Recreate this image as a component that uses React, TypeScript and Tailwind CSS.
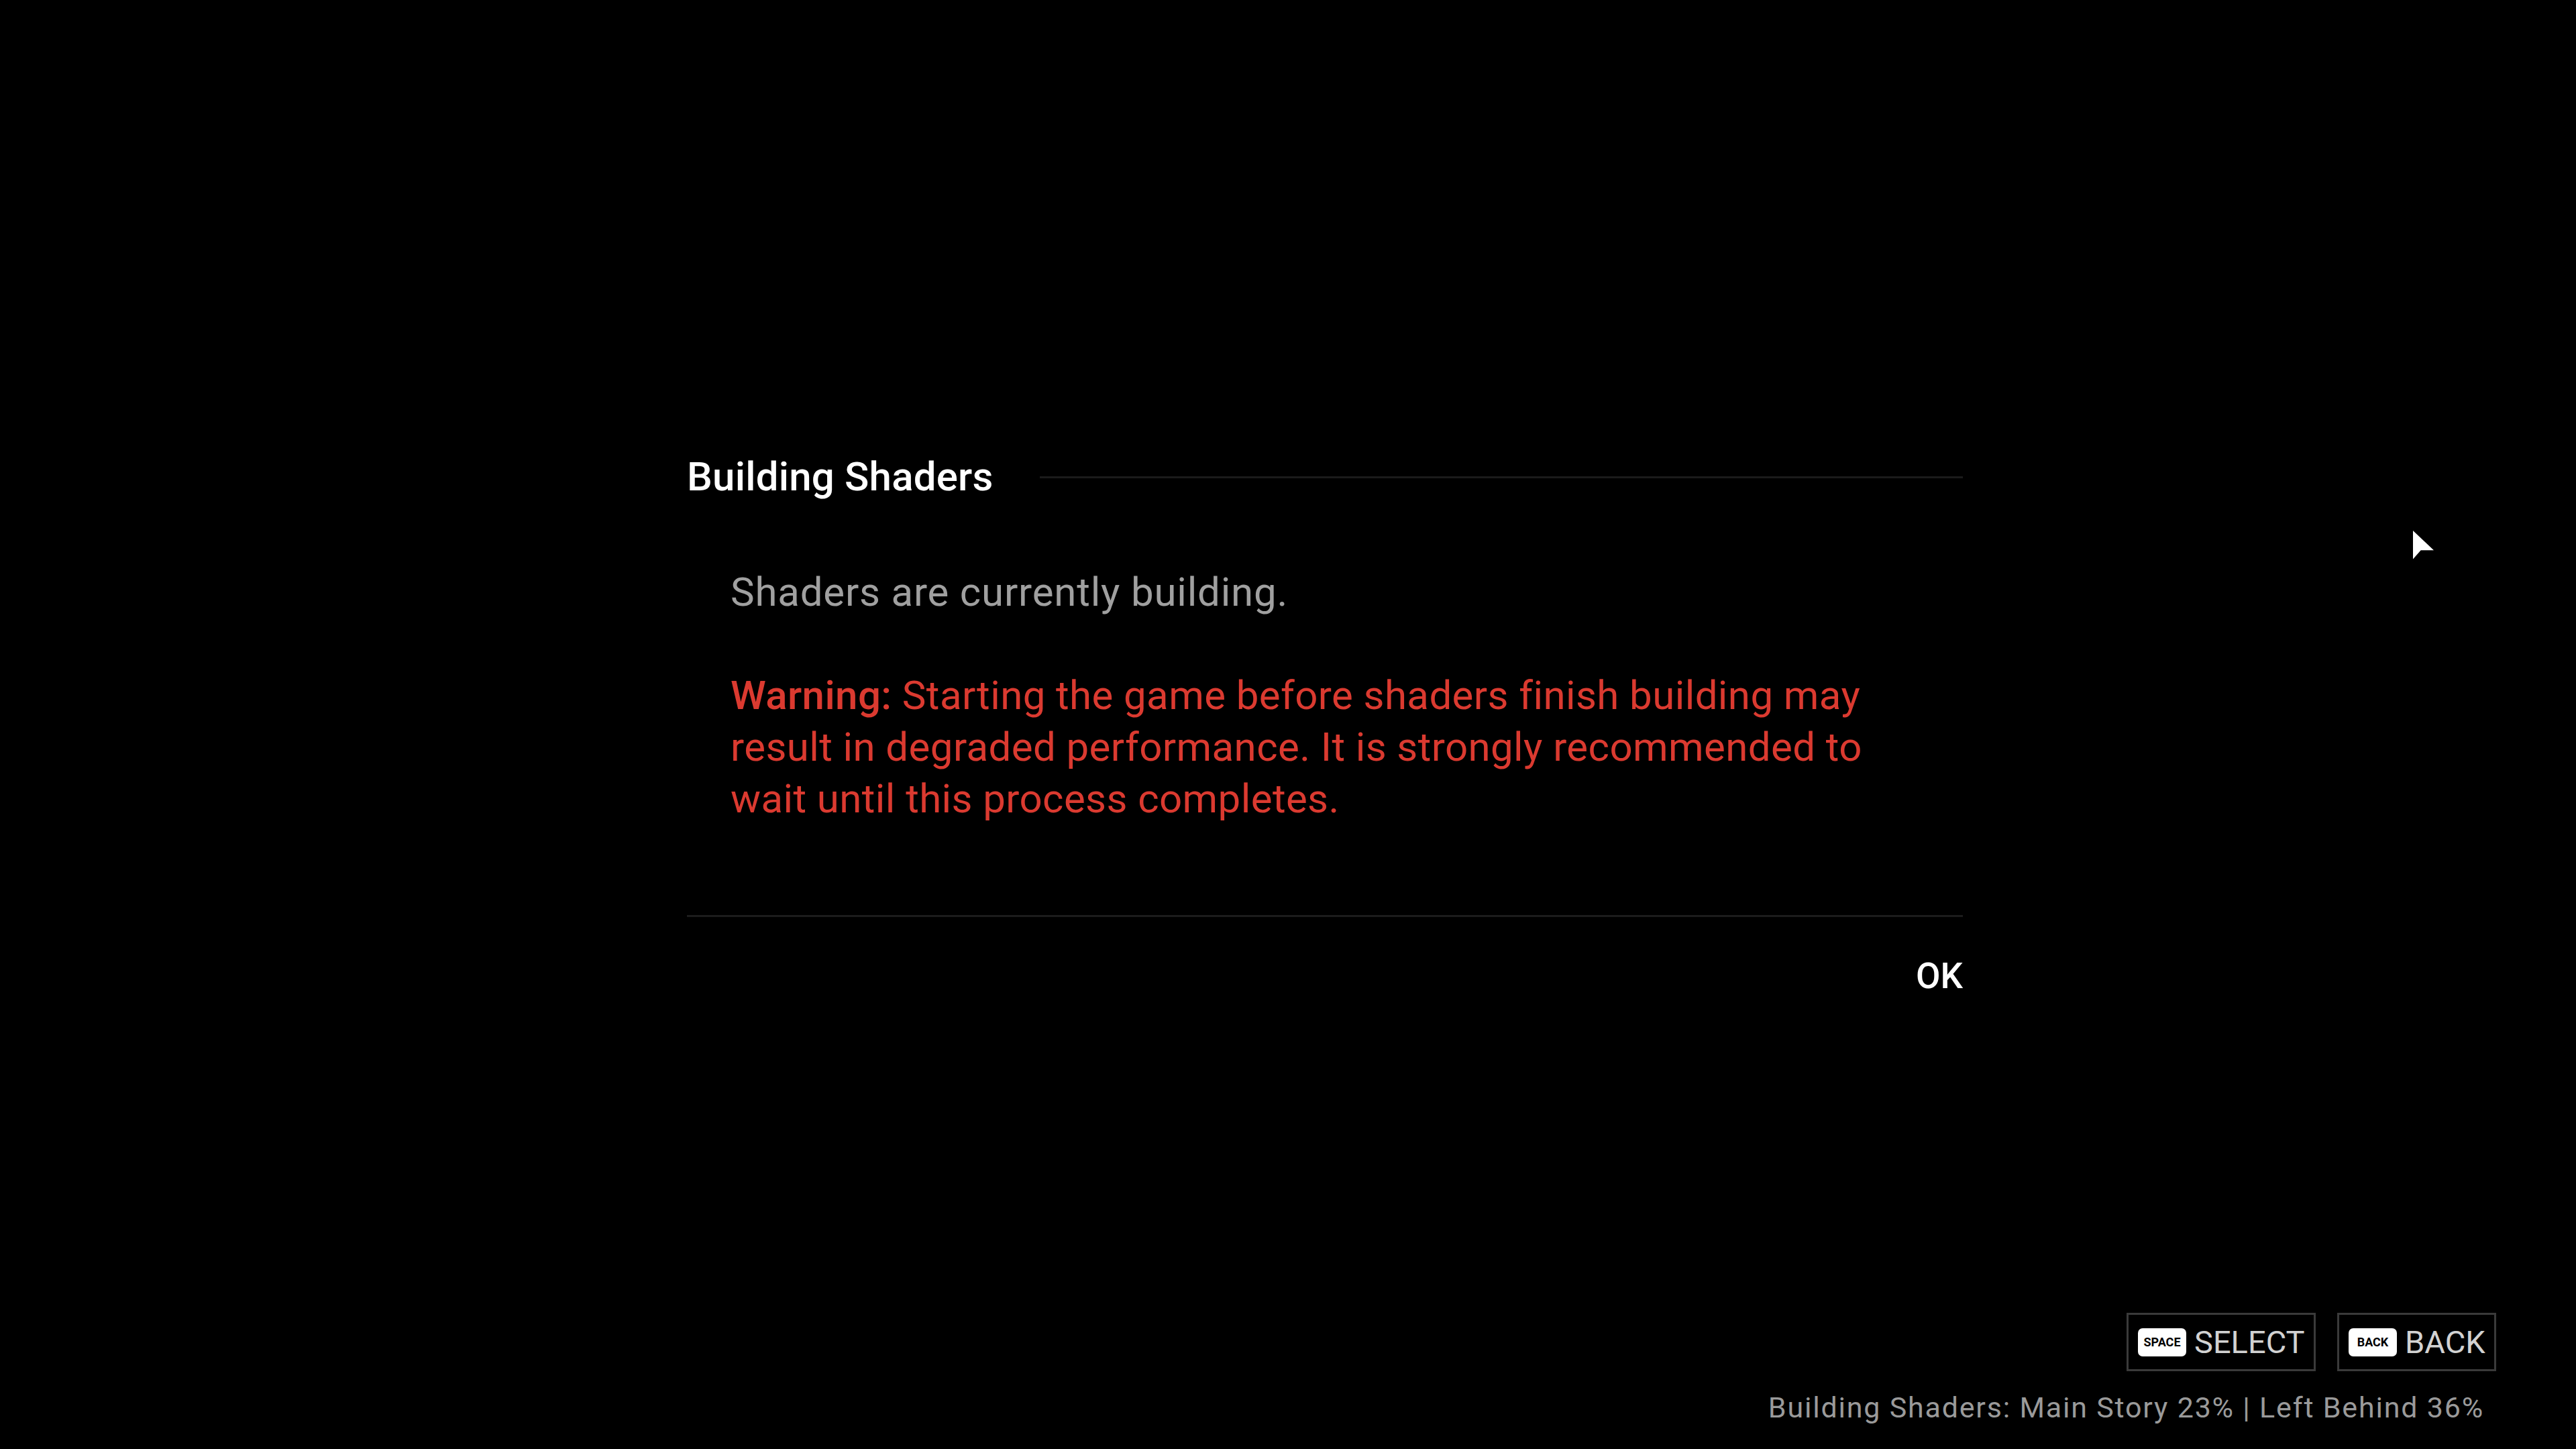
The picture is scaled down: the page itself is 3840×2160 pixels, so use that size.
const hints = [
  { key: "SPACE", label: "SELECT", width: "w-[282px]" },
  { key: "BACK", label: "BACK", width: "w-[237px]" }
];

function Cursor() {
  return (
    <svg
      className="absolute left-[3597px] top-[791px]"
      width="32"
      height="44"
      viewBox="0 0 32 44"
    >
      <polygon points="0,0 0,42.5 11.7,29.3 31,29.3" fill="#ffffff" />
    </svg>
  );
}

export default function App() {
  return (
    <div
      className="relative flex h-[2160px] w-[3840px] flex-col overflow-hidden bg-black text-white"
      style={{ fontFamily: "Roboto, 'Liberation Sans', sans-serif" }}
    >
      <main className="ml-[1024px] mt-[681px] flex w-[1902px] flex-col">
        <div className="flex items-center">
          <h1 className="w-[526px] shrink-0 text-[60px] font-medium leading-none tracking-[0.2px] text-white">
            Building Shaders
          </h1>
          <div className="h-[3px] flex-1 bg-[#1b1b1b]" />
        </div>

        <div className="mt-[103px] pl-[65px] text-[60px] leading-[77px]">
          <p className="tracking-[0.8px] text-[#a0a0a0]">Shaders are currently building.</p>
          <p className="mt-[77px] tracking-[0.4px] text-[#db3a30]">
            <span className="font-medium">Warning:</span> Starting the game before shaders finish building may
            <br />
            result in degraded performance. It is strongly recommended to
            <br />
            wait until this process completes.
          </p>
        </div>

        <div className="mt-[135px] h-[3px] w-full bg-[#1c1c1c]" />

        <div className="mt-[62px] flex justify-end">
          <button className="text-[53px] font-medium leading-none text-white">OK</button>
        </div>
      </main>

      <div className="flex-1" />

      <footer className="flex flex-col items-end pb-[40px] pr-[119px]">
        <div className="flex gap-[32px]">
          {hints.map((hint) => (
            <div
              key={hint.label}
              className={`flex h-[87px] ${hint.width} items-center border-[3px] border-[#3a3a3a] pl-[14px]`}
            >
              <span className="flex h-[42px] w-[72px] items-center justify-center rounded-[7px] bg-white text-[18px] font-bold leading-none text-black">
                {hint.key}
              </span>
              <span className="ml-[12px] text-[47px] leading-none text-[#d2d2d2]">
                {hint.label}
              </span>
            </div>
          ))}
        </div>
        <p className="mr-[18px] mt-[33px] text-[43px] leading-none tracking-[1.8px] text-[#9a9a9a]">
          Building Shaders: Main Story 23% | Left Behind 36%
        </p>
      </footer>

      <Cursor />
    </div>
  );
}
